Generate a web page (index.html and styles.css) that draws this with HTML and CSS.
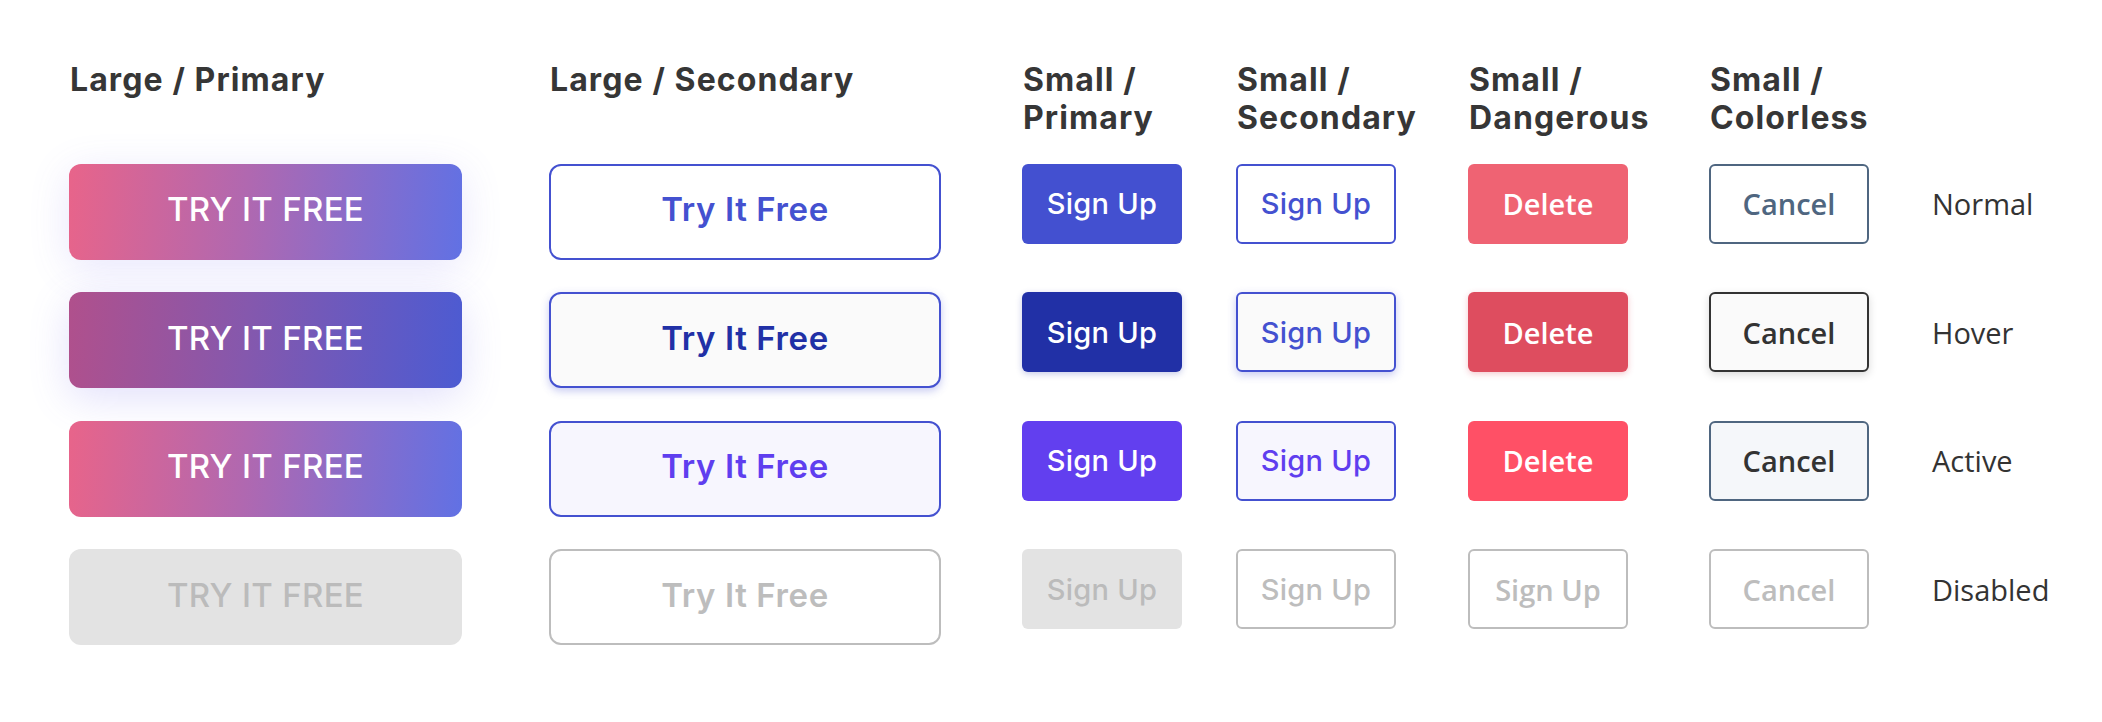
FILE: index.html
```html
<!DOCTYPE html>
<html lang="en">
<head>
<meta charset="utf-8">
<title>Buttons</title>
<link rel="stylesheet" href="styles.css">
</head>
<body>
<div class="sheet">
  <h2 class="head">Large / Primary</h2>
  <h2 class="head">Large / Secondary</h2>
  <h2 class="head">Small /<br>Primary</h2>
  <h2 class="head">Small /<br>Secondary</h2>
  <h2 class="head">Small /<br>Dangerous</h2>
  <h2 class="head">Small /<br>Colorless</h2>
  <div class="head"></div>

  <div class="btn lg lp normal">TRY IT FREE</div>
  <div class="btn lg ls normal">Try It Free</div>
  <div class="btn sm sp normal">Sign Up</div>
  <div class="btn sm ss normal">Sign Up</div>
  <div class="btn sm sd normal">Delete</div>
  <div class="btn sm sc normal">Cancel</div>
  <div class="state">Normal</div>

  <div class="btn lg lp hover">TRY IT FREE</div>
  <div class="btn lg ls hover">Try It Free</div>
  <div class="btn sm sp hover">Sign Up</div>
  <div class="btn sm ss hover">Sign Up</div>
  <div class="btn sm sd hover">Delete</div>
  <div class="btn sm sc hover">Cancel</div>
  <div class="state">Hover</div>

  <div class="btn lg lp active">TRY IT FREE</div>
  <div class="btn lg ls active">Try It Free</div>
  <div class="btn sm sp active">Sign Up</div>
  <div class="btn sm ss active">Sign Up</div>
  <div class="btn sm sd active">Delete</div>
  <div class="btn sm sc active">Cancel</div>
  <div class="state">Active</div>

  <div class="btn lg lp disabled">TRY IT FREE</div>
  <div class="btn lg ls disabled">Try It Free</div>
  <div class="btn sm sp disabled">Sign Up</div>
  <div class="btn sm ss disabled">Sign Up</div>
  <div class="btn sm sd disabled">Sign Up</div>
  <div class="btn sm sc disabled">Cancel</div>
  <div class="state">Disabled</div>
</div>
</body>
</html>
```

FILE: styles.css
```css
html, body {
  margin: 0;
  padding: 0;
  background: #ffffff;
}

.sheet {
  display: grid;
  grid-template-columns: 480px 473px 214px 232px 241px 223px auto;
  grid-template-rows: 70px;
  grid-auto-rows: 96px;
  row-gap: 32.5px;
  padding: 61px 0 0 69px;
  align-items: start;
  font-family: Inter, "Noto Sans", sans-serif;
}

.head {
  margin: 0;
  padding-left: 1px;
  font-size: 32px;
  line-height: 38px;
  font-weight: 700;
  color: #363636;
  letter-spacing: 1.1px;
}

.btn {
  box-sizing: border-box;
  display: flex;
  align-items: center;
  justify-content: center;
  font-weight: 500;
  white-space: nowrap;
}

.lg {
  height: 96px;
  padding-bottom: 5px;
  border-radius: 12px;
  font-size: 33px;
}

.lp { width: 393px; color: #ffffff; letter-spacing: 0.3px; }
.ls { width: 392px; border: 2px solid #4451d0; background: #ffffff; color: #4451d0; font-weight: 600; letter-spacing: 0.6px; }

.sm {
  width: 160px;
  height: 80px;
  border-radius: 6px;
  font-size: 29px;
  letter-spacing: 0.3px;
}

.sp { color: #ffffff; background: #4350d0; }
.ss { border: 2px solid #4451d0; color: #4451d0; background: #ffffff; }
.sd, .sc {
  font-family: "Open Sans", "Noto Sans", sans-serif;
  font-weight: 600;
  font-size: 29px;
  letter-spacing: 0;
}
.sd { color: #ffffff; background: #ef6373; }
.sc { border: 2px solid #4f6680; color: #4f6680; background: #ffffff; }

/* Large primary */
.lp.normal, .lp.active {
  background: linear-gradient(95deg, #e8648a 0%, #b068b0 45%, #6171e4 100%);
}
.lp.normal { box-shadow: 0 8px 40px rgba(110, 100, 235, 0.16); }
.lp.hover {
  background: linear-gradient(95deg, #b0508c 0%, #8558ad 45%, #4c5bd2 100%);
  box-shadow: 0 10px 40px rgba(110, 100, 235, 0.2);
}
.lp.disabled { background: #e3e3e3; color: #bbbbbb; }

/* Large secondary */
.ls.hover { background: #fafafa; color: #2130a6; box-shadow: 0 3px 8px rgba(68, 81, 208, 0.3); }
.ls.active { background: #f7f6fe; color: #5f3eef; }
.ls.disabled { border-color: #bdbdbd; color: #bdbdbd; }

/* Small primary */
.sp.hover { background: #2130a6; box-shadow: 0 2px 6px rgba(33, 48, 166, 0.25); }
.sp.active { background: #623fef; }
.sp.disabled { background: #e3e3e3; color: #bbbbbb; }

/* Small secondary */
.ss.hover { background: #fafafa; box-shadow: 0 3px 8px rgba(68, 81, 208, 0.3); }
.ss.active { background: #f7f6fe; color: #5f3eef; }
.ss.disabled { border-color: #bdbdbd; color: #bdbdbd; }

/* Small dangerous */
.sd.hover { background: #de4d5f; box-shadow: 0 2px 6px rgba(222, 77, 95, 0.3); }
.sd.active { background: #ff5066; }
.sd.disabled { background: #ffffff; border: 2px solid #bdbdbd; color: #bdbdbd; }

/* Small colorless */
.sc.hover { border-color: #333333; background: #fafafa; color: #333333; box-shadow: 0 3px 8px rgba(0, 0, 0, 0.15); }
.sc.active { background: #f5f7fa; color: #333333; }
.sc.disabled { border-color: #bdbdbd; color: #bdbdbd; }

.state {
  height: 80px;
  display: flex;
  align-items: center;
  font-family: "Open Sans", "Noto Sans", sans-serif;
  font-size: 29px;
  color: #333333;
}
```
